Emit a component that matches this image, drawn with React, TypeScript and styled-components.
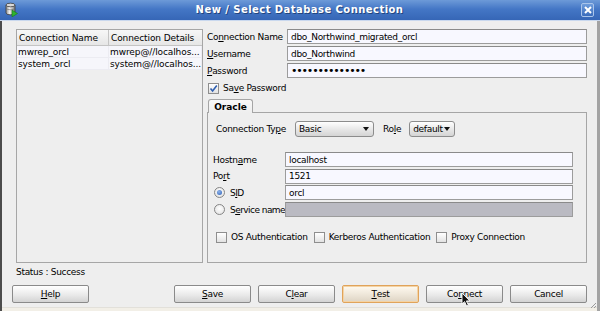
import React from "react";
import styled, { createGlobalStyle } from "styled-components";

const Global = createGlobalStyle`
  html, body { margin: 0; padding: 0; background: #eeeeee; }
  body { font-family: "DejaVu Sans", "Liberation Sans", sans-serif; font-size: 9px; letter-spacing: -0.3px; color: #000; }
  * { box-sizing: border-box; }
`;

const Window = styled.div`
  position: relative;
  width: 600px;
  height: 311px;
  display: flex;
  flex-direction: column;
  background: #eeeeee;
  overflow: hidden;
`;

const TitleBar = styled.div`
  height: 21px;
  flex: none;
  display: flex;
  align-items: center;
  padding: 0 5px 1px 5px;
  background: linear-gradient(#6d9ad8 0%, #4477c6 45%, #3666b6 100%);
  border-bottom: 1px solid #c9d8ee;
`;

const TitleText = styled.div`
  flex: 1;
  text-align: center;
  font-weight: bold;
  font-size: 10px;
  letter-spacing: 0.45px;
  color: #ffffff;
  text-shadow: 1px 1px 0 #22457e;
`;

const CloseBtn = styled.div`
  width: 13px;
  height: 14px;
  margin-right: 1px;
  border: 1px solid #a9c4ea;
  border-radius: 2px;
  background: linear-gradient(#6f9ddc, #3a6cbc);
  display: flex;
  align-items: center;
  justify-content: center;
`;

const Body = styled.div`
  flex: 1;
  display: flex;
  flex-direction: column;
  border-left: 2px solid #4c4c4c;
  border-right: 3px solid #a3a3a3;
  padding: 8px 10px 0 0;
`;

const MainRow = styled.div`
  height: 234px;
  display: flex;
  gap: 4px;
  margin-left: 14px;
`;

const ListBox = styled.div`
  width: 187px;
  border: 1px solid #a6a6a6;
  background: #eeeeee;
  display: flex;
  flex-direction: column;
`;

const ListHeader = styled.div`
  height: 16px;
  display: grid;
  grid-template-columns: 92px 1fr;
  background: linear-gradient(#f7f7f7, #e6e6e6);
  border-bottom: 1px solid #c4c4c4;
`;

const HeaderCell = styled.div<{ $last?: boolean }>`
  display: flex;
  align-items: center;
  padding-left: 2px;
  letter-spacing: -0.1px;
  border-right: ${(p) => (p.$last ? "none" : "1px solid #c4c4c4")};
  white-space: nowrap;
  overflow: hidden;
`;

const ListRow = styled.div`
  height: 12px;
  display: grid;
  grid-template-columns: 92px 1fr;
  border-bottom: 1px solid #ececf2;
`;

const Cell = styled.div`
  display: flex;
  align-items: center;
  padding-left: 1px;
  letter-spacing: -0.1px;
  background: #f6f6fb;
  border-right: 1px solid #ececf2;
  white-space: nowrap;
  overflow: hidden;
`;

const FormCol = styled.div`
  width: 380px;
  display: flex;
  flex-direction: column;
`;

const FieldGrid = styled.div`
  display: grid;
  grid-template-columns: 80px 300px;
  grid-auto-rows: 15px;
  row-gap: 2px;
`;

const Label = styled.div`
  display: flex;
  align-items: center;
  white-space: nowrap;
`;

const TextBox = styled.div<{ $disabled?: boolean }>`
  display: flex;
  align-items: center;
  padding-left: 3px;
  background: ${(p) => (p.$disabled ? "#babac2" : "#f8f8ff")};
  border: 1px solid #9c9c9c;
  border-top-color: #8a8a8a;
  white-space: nowrap;
  overflow: hidden;
`;

const Dots = styled.span`
  font-size: 11px;
  letter-spacing: -1.2px;
  line-height: 1;
`;

const CheckLine = styled.div<{ $ml?: number }>`
  display: flex;
  align-items: center;
  gap: 4px;
  height: 12px;
  margin-left: ${(p) => p.$ml ?? 0}px;
  white-space: nowrap;
`;

const SaveRow = styled(CheckLine)`
  margin-top: 4px;
  margin-left: 1px;
`;

const Box = styled.div`
  width: 11px;
  height: 11px;
  flex: none;
  border: 1px solid #8e8e8e;
  background: linear-gradient(#ffffff, #e2e2e2);
  display: flex;
  align-items: center;
  justify-content: center;
`;

const Radio = styled.div<{ $on?: boolean }>`
  width: 11px;
  height: 11px;
  flex: none;
  border: 1px solid #858585;
  border-radius: 50%;
  background: radial-gradient(circle at 50% 40%, #ffffff, #dedede);
  display: flex;
  align-items: center;
  justify-content: center;
  &::after {
    content: "";
    display: ${(p) => (p.$on ? "block" : "none")};
    width: 5px;
    height: 5px;
    border-radius: 50%;
    background: radial-gradient(circle at 40% 35%, #8fb4ec, #2c5fb4);
  }
`;

const Tab = styled.div`
  position: relative;
  z-index: 1;
  width: 45px;
  height: 14px;
  margin: 5px 0 -1px 1px;
  border: 1px solid #a5a5a5;
  border-bottom: none;
  border-radius: 3px 3px 0 0;
  background: linear-gradient(#f8f8f8, #eeeeee);
  display: flex;
  align-items: center;
  justify-content: center;
  font-weight: bold;
  letter-spacing: 0;
`;

const TabPanel = styled.div`
  flex: 1;
  border: 1px solid #a5a5a5;
  padding: 8px 12px 0 8px;
  display: flex;
  flex-direction: column;
`;

const TypeRow = styled.div`
  height: 16px;
  display: flex;
  align-items: center;
  white-space: nowrap;
`;

const Select = styled.div<{ $w: number; $ml: number }>`
  width: ${(p) => p.$w}px;
  height: 16px;
  margin-left: ${(p) => p.$ml}px;
  border: 1px solid #8c8c8c;
  border-radius: 3px;
  background: linear-gradient(#ffffff, #e4e4e4 60%, #d4d4d4);
  display: flex;
  align-items: center;
  justify-content: space-between;
  padding: 0 4px 0 3px;
  overflow: hidden;
`;

const Arrow = styled.span`
  flex: none;
  width: 0;
  height: 0;
  border-left: 3.5px solid transparent;
  border-right: 3.5px solid transparent;
  border-top: 4px solid #111;
`;

const HostGrid = styled.div`
  margin: 15px 0 0 -3px;
  display: grid;
  grid-template-columns: 72px 288px;
  grid-auto-rows: 15px;
  row-gap: 1.7px;
`;

const RadioLabel = styled(Label)`
  gap: 5px;
  padding-left: 1px;
  letter-spacing: -0.55px;
`;

const AuthRow = styled.div`
  margin-top: 14px;
  display: flex;
  align-items: center;
  gap: 6px;
`;

const Status = styled.div`
  margin: 4px 0 0 14px;
  height: 10px;
  line-height: 10px;
`;

const ButtonRow = styled.div`
  margin: 8px 0 0 10px;
  display: flex;
  gap: 7px;
`;

const Button = styled.div<{ $focus?: boolean; $push?: boolean }>`
  width: 77px;
  height: 18px;
  margin-right: ${(p) => (p.$push ? "auto" : "0")};
  border: 1px solid ${(p) => (p.$focus ? "#e0a35a" : "#8a8a8a")};
  border-radius: 2px;
  background: ${(p) =>
    p.$focus
      ? "linear-gradient(#fffaf0, #ece4d6 60%, #ddd3c3)"
      : "linear-gradient(#ffffff, #eaeaea 55%, #d3d3d3)"};
  box-shadow: ${(p) => (p.$focus ? "inset 0 0 0 1px #f4d3a4" : "none")};
  display: flex;
  align-items: center;
  justify-content: center;
  white-space: nowrap;
`;

const U = styled.span`
  text-decoration: underline;
  text-underline-offset: 1px;
`;

const BottomEdge = styled.div`
  position: absolute;
  left: 2px;
  right: 3px;
  bottom: 0;
  height: 4px;
  background: #f2efe7;
  border-top: 1px solid #e2e0da;
`;

const Grip = styled.svg`
  position: absolute;
  right: 3px;
  bottom: 2px;
`;

const Cursor = styled.svg`
  position: absolute;
  left: 461px;
  top: 292px;
`;

const DbIcon = () => (
  <svg width="13" height="15" viewBox="0 0 13 15">
    <defs>
      <linearGradient id="cyl" x1="0" x2="1" y1="0" y2="0">
        <stop offset="0" stopColor="#8d8d8d" />
        <stop offset="0.4" stopColor="#f2f2f2" />
        <stop offset="1" stopColor="#7a7a7a" />
      </linearGradient>
    </defs>
    <path d="M1 3 v8 a4.5 1.8 0 0 0 9 0 v-8 z" fill="url(#cyl)" stroke="#3d3d3d" strokeWidth="0.8" />
    <ellipse cx="5.5" cy="3" rx="4.5" ry="1.8" fill="#d9d9d9" stroke="#3d3d3d" strokeWidth="0.8" />
    <path d="M1.3 6.5 a4.3 1.6 0 0 0 8.4 0" fill="none" stroke="#6a6a6a" strokeWidth="0.6" />
    <path d="M7 8 L12.5 11.5 L7 15 Z" fill="#2fb32f" stroke="#1a7a1a" strokeWidth="0.6" />
  </svg>
);

const Check = () => (
  <svg width="9" height="9" viewBox="0 0 9 9">
    <path d="M1.5 4.5 L3.6 7 L7.8 1.5" fill="none" stroke="#2f5fb0" strokeWidth="1.6" />
  </svg>
);

export default function App() {
  return (
    <>
      <Global />
      <Window>
        <TitleBar>
          <DbIcon />
          <TitleText>New / Select Database Connection</TitleText>
          <CloseBtn>
            <svg width="8" height="8" viewBox="0 0 8 8">
              <path d="M1 1 L7 7 M7 1 L1 7" stroke="#ffffff" strokeWidth="2" />
            </svg>
          </CloseBtn>
        </TitleBar>
        <Body>
          <MainRow>
            <ListBox>
              <ListHeader>
                <HeaderCell>Connection Name</HeaderCell>
                <HeaderCell $last>Connection Details</HeaderCell>
              </ListHeader>
              <ListRow>
                <Cell>mwrep_orcl</Cell>
                <Cell>mwrep@//localhos...</Cell>
              </ListRow>
              <ListRow>
                <Cell>system_orcl</Cell>
                <Cell>system@//localhos...</Cell>
              </ListRow>
            </ListBox>
            <FormCol>
              <FieldGrid>
                <Label>
                  Co<U>n</U>nection Name
                </Label>
                <TextBox>dbo_Northwind_migrated_orcl</TextBox>
                <Label>
                  <U>U</U>sername
                </Label>
                <TextBox>dbo_Northwind</TextBox>
                <Label>
                  <U>P</U>assword
                </Label>
                <TextBox>
                  <Dots>••••••••••••••</Dots>
                </TextBox>
              </FieldGrid>
              <SaveRow>
                <Box>
                  <Check />
                </Box>
                <span>
                  Sa<U>v</U>e Password
                </span>
              </SaveRow>
              <Tab>Oracle</Tab>
              <TabPanel>
                <TypeRow>
                  <span>
                    Connection Ty<U>p</U>e
                  </span>
                  <Select $w={79} $ml={9}>
                    <span>Basic</span>
                    <Arrow />
                  </Select>
                  <span style={{ marginLeft: 9 }}>
                    Ro<U>l</U>e
                  </span>
                  <Select $w={46} $ml={8}>
                    <span>default</span>
                    <Arrow />
                  </Select>
                </TypeRow>
                <HostGrid>
                  <Label>
                    Hostn<U>a</U>me
                  </Label>
                  <TextBox>localhost</TextBox>
                  <Label>
                    Po<U>r</U>t
                  </Label>
                  <TextBox>1521</TextBox>
                  <RadioLabel>
                    <Radio $on />
                    <span>
                      S<U>I</U>D
                    </span>
                  </RadioLabel>
                  <TextBox>orcl</TextBox>
                  <RadioLabel>
                    <Radio />
                    <span>
                      S<U>e</U>rvice name
                    </span>
                  </RadioLabel>
                  <TextBox $disabled />
                </HostGrid>
                <AuthRow>
                  <CheckLine>
                    <Box />
                    <span>OS Authentication</span>
                  </CheckLine>
                  <CheckLine>
                    <Box />
                    <span>Kerberos Authentication</span>
                  </CheckLine>
                  <CheckLine>
                    <Box />
                    <span>Proxy Connection</span>
                  </CheckLine>
                </AuthRow>
              </TabPanel>
            </FormCol>
          </MainRow>
          <Status>Status : Success</Status>
          <ButtonRow>
            <Button $push>
              <U>H</U>elp
            </Button>
            <Button>
              <U>S</U>ave
            </Button>
            <Button>
              C<U>l</U>ear
            </Button>
            <Button $focus>
              <U>T</U>est
            </Button>
            <Button>
              Co<U>n</U>nect
            </Button>
            <Button>Cancel</Button>
          </ButtonRow>
        </Body>
        <BottomEdge />
        <Grip width="8" height="8" viewBox="0 0 8 8">
          <path d="M7 2 L2 7 M7 5 L5 7" stroke="#9a9a9a" strokeWidth="1" />
        </Grip>
        <Cursor width="10" height="15" viewBox="0 0 10 15">
          <path d="M1 1 L1 12 L3.6 9.6 L5.6 14 L7.4 13.2 L5.4 8.9 L8.8 8.9 Z" fill="#111" stroke="#fff" strokeWidth="0.9" />
        </Cursor>
      </Window>
    </>
  );
}
